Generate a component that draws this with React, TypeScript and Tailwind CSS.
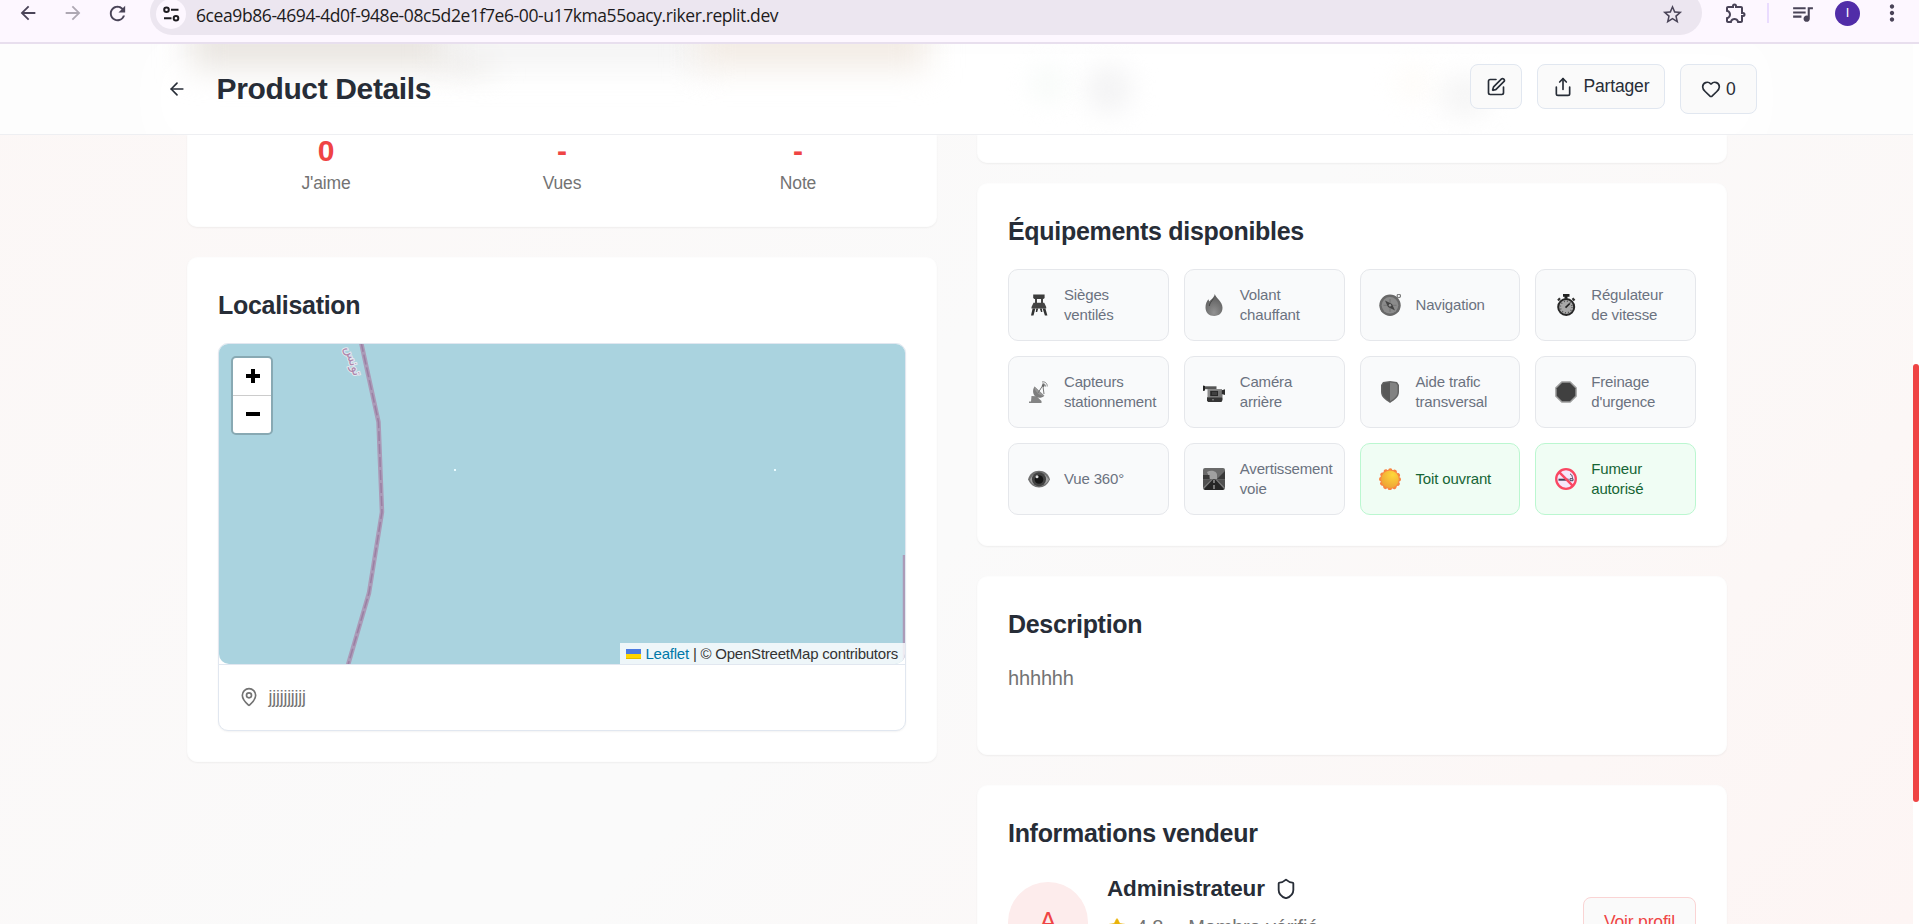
import type { ReactNode } from "react";
import { ArrowLeft, Heart, MapPin, Share, Shield, SquarePen, Star } from "lucide-react";
import {
  MdArrowBack,
  MdArrowForward,
  MdMoreVert,
  MdOutlineExtension,
  MdQueueMusic,
  MdRefresh,
  MdStarBorder,
} from "react-icons/md";

function Icon({ children }: { children: ReactNode }) {
  return (
    <svg width="22" height="22" viewBox="0 0 22 22" className="shrink-0">
      {children}
    </svg>
  );
}

const ChairIcon = () => (
  <Icon>
    <path d="M5.200 0.500h11.400v3.500l-1.200 1H6.400l-1.200-1z" fill="#3d3d3d" />
    <path d="M7 5h2v4H7zM13 5h2v4h-2z" fill="#444" />
    <path d="M5.500 8.800h10.700l2 4.200v1.500H3.500V13z" fill="#444" />
    <path d="M4.600 14.500h2.800L5.500 21.500H3zM8.200 14.500h2l-1 3.500H7.800zM11.800 14.500h2l.6 3.500H13zM14.600 14.500h2.800l2 7h-2.500z" fill="#333" />
  </Icon>
);

const FlameIcon = () => (
  <Icon>
    <defs>
      <radialGradient id="flame" cx="50%" cy="85%" r="75%">
        <stop offset="0" stopColor="#929292" />
        <stop offset="1" stopColor="#5e5e5e" />
      </radialGradient>
    </defs>
    <path d="M11.800 0c1 4.500 7.700 7 7.700 13.800 0 5-3.200 8.200-8.300 8.200-5.200 0-8.700-3.400-8.700-8.500 0-3.500 1.300-6.200 2.800-8.200l1 2.200C8 5.500 11 4 11.800 0z" fill="url(#flame)" />
    <path d="M10.500 4.500C8.500 7.500 6.500 9 6.300 12" stroke="#444" strokeWidth="1" fill="none" />
  </Icon>
);

const CompassIcon = () => (
  <Icon>
    <circle cx="19.800" cy="2" r="1.700" stroke="#777" strokeWidth="1.100" fill="none" />
    <circle cx="11" cy="11.300" r="10.700" fill="#686868" />
    <circle cx="11" cy="11.300" r="8.300" fill="#8b8b8b" />
    <path d="M11 5v13M4.500 11.300h13" stroke="#737373" strokeWidth="1" />
    <path d="M6 6.500l7 3.500 3 6.500-7-3.500z" fill="#444" />
    <circle cx="11" cy="11.300" r="1.200" fill="#999" />
  </Icon>
);

const StopwatchIcon = () => (
  <Icon>
    <path d="M8 0h6.500v2.800h-2v2h-3v-2H8z" fill="#222" />
    <path d="M3 6.500L5 4.300M19.500 6.500l-2-2.200" stroke="#333" strokeWidth="2.200" />
    <circle cx="11.200" cy="13" r="8" fill="#a8a8a8" stroke="#262626" strokeWidth="2" />
    <circle cx="11.200" cy="13" r="5.800" fill="none" stroke="#555" strokeWidth="1.400" strokeDasharray="1 2.037" />
    <path d="M10.500 13.700l4.300-4.200" stroke="#222" strokeWidth="1.700" />
  </Icon>
);

const SatelliteIcon = () => (
  <Icon>
    <path d="M3.500 15l5 .3 5 4.700v2H1v-1.500h2z" fill="#848484" />
    <path d="M6.500 5.500c-2.500 4-1.500 8 1 10 2.800 2 6.300 1.800 8.800-.8z" fill="#7d7d7d" />
    <path d="M6.500 5.500l9.800 9.200-1.300.3c-4-.8-7.500-4-8.500-8z" fill="#969696" />
    <path d="M10 12l5-8M14.800 4l1.200 9" stroke="#777" strokeWidth="1" />
    <circle cx="15.300" cy="4.500" r="1.400" fill="#666" />
    <path d="M14 1c3-.8 5.500 1.500 5.200 4.500M14.500 2.700c1.800-.3 3.200 1 3 2.800" stroke="#777" strokeWidth=".9" fill="none" />
  </Icon>
);

const CameraIcon = () => (
  <Icon>
    <path d="M0 4.500l2 .5v4.500l-2 .5z" fill="#222" />
    <path d="M2 5.300h11.500v2.900H2z" fill="#555" />
    <path d="M4.500 8h14.500v8.500H4.500z" fill="#8a8a8a" />
    <path d="M7.200 9.800h8v5.400h-8z" fill="#292929" />
    <path d="M9 10.800h5v3.200H9z" fill="#404040" />
    <path d="M15.500 9.500h4v6.500h-4z" fill="#777" />
    <path d="M18.800 9.200l3.200-1V14l-3.200-1z" fill="#2c2c2c" />
    <path d="M4 16.300h15.500V19l-1 2H5l-1-1.500z" fill="#353535" />
    <circle cx="10" cy="18.800" r=".8" fill="#999" />
  </Icon>
);

const GuardIcon = () => (
  <Icon>
    <path d="M11 0L18 1l2 3v7c0 5-4.500 8-9 11C6.500 19 2 16 2 11V4l2-3z" fill="#636363" />
    <path d="M11 1.500l6 .8 1.500 2.200V11c0 4-3.500 6.500-7.500 9.300z" fill="#828282" />
    <path d="M11 1.500l-6 .8-1.500 2.200V11c0 4 3.500 6.500 7.500 9.300z" fill="#585858" />
  </Icon>
);

const OctagonIcon = () => (
  <Icon>
    <path d="M6.600 .2h8.800l6.400 6.400v8.800l-6.400 6.400H6.600L.2 15.400V6.600z" fill="#9b9b9b" />
    <path d="M7.200 1.700h7.600l5.500 5.500v7.600l-5.500 5.500H7.200l-5.500-5.500V7.200z" fill="#404040" />
  </Icon>
);

const EyeIcon = () => (
  <Icon>
    <path d="M0 11.500C1.500 5.700 5.500 2.800 11 2.800s9.500 2.900 11 8.700c-2.500 5.200-6 8-11 8s-8.500-2.800-11-8z" fill="#717171" />
    <path d="M2 11.700C4 7.500 6.500 5 11 5s7.500 2.500 10 6.700c-2.500 4-5.800 6.200-10 6.200s-7.500-2.200-9-6.200z" fill="#a0a0a0" />
    <circle cx="11" cy="11.300" r="7" fill="#424242" />
    <circle cx="11" cy="11.500" r="4.300" fill="#161616" />
    <circle cx="9" cy="8.700" r="1.500" fill="#ddd" />
  </Icon>
);

const RoadIcon = () => (
  <Icon>
    <rect width="22" height="22" rx="2" fill="#6a6a6a" />
    <path d="M4 4c4-2.500 10-1 10 3v4H7z" fill="#a0a0a0" />
    <path d="M22 3v8h-8zM0 7h6.500v4H0z" fill="#393939" />
    <path d="M0 11.500h9L0 20zM13 11.500h9V20z" fill="#505050" />
    <path d="M9.800 11.500h2.600L21 21l-1 1H2l-1-1z" fill="#252525" />
    <path d="M11 12v3M11 17v4" stroke="#bbb" strokeWidth="1.100" />
    <path d="M9 11.500L0 20.500M13.200 11.500l8.800 9" stroke="#8d8d8d" strokeWidth=".8" />
  </Icon>
);

const SunIcon = () => (
  <Icon>
    <defs>
      <radialGradient id="sun" cx="65%" cy="25%" r="80%">
        <stop offset="0" stopColor="#ffd83a" />
        <stop offset="1" stopColor="#eda236" />
      </radialGradient>
    </defs>
    <circle cx="11" cy="11.300" r="9" fill="none" stroke="#f98542" strokeWidth="4" strokeLinecap="round" strokeDasharray="0.100 4.612" />
    <circle cx="11" cy="11.300" r="9.700" fill="#f98542" />
    <circle cx="11" cy="11.300" r="8.800" fill="url(#sun)" />
  </Icon>
);

const NoSmokingIcon = () => (
  <Icon>
    <circle cx="11" cy="11" r="9.500" fill="#f6e7fb" />
    <path d="M3.500 10.700h10v2h-10z" fill="#454159" />
    <path d="M15 10.700h3v2h-3zM15 6c3 1 1.500 3 3 4" fill="none" stroke="#454159" strokeWidth="1" />
    <circle cx="11" cy="11" r="9.800" fill="none" stroke="#fa4762" strokeWidth="2.300" />
    <path d="M4.200 4.200l13.600 13.600" stroke="#fa4762" strokeWidth="2.400" />
  </Icon>
);

type Feature = { icon: ReactNode; lines: string[]; active?: boolean };

const features: Feature[] = [
  { icon: <ChairIcon />, lines: ["Sièges", "ventilés"] },
  { icon: <FlameIcon />, lines: ["Volant", "chauffant"] },
  { icon: <CompassIcon />, lines: ["Navigation"] },
  { icon: <StopwatchIcon />, lines: ["Régulateur", "de vitesse"] },
  { icon: <SatelliteIcon />, lines: ["Capteurs", "stationnement"] },
  { icon: <CameraIcon />, lines: ["Caméra", "arrière"] },
  { icon: <GuardIcon />, lines: ["Aide trafic", "transversal"] },
  { icon: <OctagonIcon />, lines: ["Freinage", "d'urgence"] },
  { icon: <EyeIcon />, lines: ["Vue 360°"] },
  { icon: <RoadIcon />, lines: ["Avertissement", "voie"] },
  { icon: <SunIcon />, lines: ["Toit ouvrant"], active: true },
  { icon: <NoSmokingIcon />, lines: ["Fumeur", "autorisé"], active: true },
];

const stats = [
  { value: "0", label: "J'aime" },
  { value: "-", label: "Vues" },
  { value: "-", label: "Note" },
];

function BrowserBar() {
  return (
    <div className="h-11 w-full shrink-0 overflow-hidden border-b-2 border-[#e8dfee] bg-[#fdf7ff]">
      <div className="-mt-[9px] flex h-11 items-center pl-[5px] text-[#4a4458]">
        <div className="flex w-[45px] justify-center"><MdArrowBack size={22} /></div>
        <div className="flex w-[45px] justify-center text-[#aea8b3]"><MdArrowForward size={22} /></div>
        <div className="flex w-[45px] justify-center"><MdRefresh size={23} /></div>
        <div className="ml-[10px] flex h-11 w-[1552px] items-center rounded-full bg-[#ece6f0] pl-[6px] pr-[18px]">
          <div className="mt-[2px] flex size-[30px] items-center justify-center rounded-full bg-[#fdf7ff]">
            <svg width="17" height="16" viewBox="0 0 17 16" fill="none" stroke="#1d1b20" strokeWidth="2">
              <circle cx="3.500" cy="3.800" r="2.300" />
              <path d="M8 3.800h7.500M1 12.200h7.500" />
              <circle cx="13" cy="12.200" r="2.300" />
            </svg>
          </div>
          <div className="ml-[10px] mt-[3px] flex-1 font-['Open_Sans',sans-serif] text-[17.5px] leading-6 tracking-[-0.41px] whitespace-nowrap text-[#1d1b20]">
            6cea9b86-4694-4d0f-948e-08c5d2e1f7e6-00-u17kma55oacy.riker.replit.dev
          </div>
          <MdStarBorder size={23} className="mt-[2px]" />
        </div>
        <div className="flex w-[65px] justify-center pl-[3px]"><MdOutlineExtension size={24} /></div>
        <div className="h-5 w-[2px] bg-[#eadcff]" />
        <div className="flex w-[66px] justify-center"><MdQueueMusic size={25} /></div>
        <div className="flex size-[25px] items-center justify-center rounded-full bg-[#512da8] font-['Roboto',sans-serif] text-[13px] text-white">
          I
        </div>
        <div className="ml-[5px] flex w-[54px] justify-center"><MdMoreVert size={26} /></div>
      </div>
    </div>
  );
}

function Header() {
  return (
    <header className="relative h-[91px] shrink-0 overflow-hidden border-b border-[#eeeff2] bg-[#fdfdfd]">
      <div className="absolute inset-x-[150px] -bottom-4 top-0 bg-white blur-xl" />
      <div className="absolute -top-[26px] left-[190px] h-[50px] w-[300px] bg-[#e9e5e0] blur-[16px]" />
      <div className="absolute -top-[26px] left-[440px] h-[50px] w-[270px] bg-[#f4f4f4] blur-[16px]" />
      <div className="absolute -top-[26px] left-[697px] h-[50px] w-[230px] bg-[#f2ebe4] blur-[16px]" />
      <div className="absolute left-[1030px] top-[20px] h-[40px] w-[36px] rounded-full bg-[#f8fbf9] blur-[12px]" />
      <div className="absolute left-[1086px] top-[20px] h-[50px] w-[46px] rounded-full bg-[#f4f4f5] blur-[12px]" />
      <div className="absolute left-[1395px] top-[20px] h-[40px] w-[36px] rounded-full bg-[#fefcf9] blur-[12px]" />
      <div className="absolute left-[1440px] top-[30px] h-[44px] w-[50px] rounded-full bg-[#f6f6f6] blur-[12px]" />
      <div className="relative flex h-[90px] items-center pl-[167px] pr-[156px] text-[#272d37]">
        <ArrowLeft size={20} />
        <h1 className="ml-[29.5px] flex-1 text-[30px] leading-9 font-bold tracking-[-0.36px]">Product Details</h1>
        <div className="flex items-start gap-[15px] text-[17.5px]">
          <button className="flex h-[45px] w-[52px] items-center justify-center rounded-lg border border-[#e1e7f0] bg-[#fafafa]">
            <SquarePen size={20} />
          </button>
          <button className="flex h-[45px] w-32 items-center rounded-lg border border-[#e1e7f0] bg-[#fafafa] pl-[15px]">
            <Share size={20} />
            <span className="ml-[10.5px]">Partager</span>
          </button>
          <button className="flex h-[50px] w-[77px] items-center rounded-lg border border-[#e1e7f0] bg-[#fafafa] pl-5">
            <Heart size={20} />
            <span className="ml-[5px]">0</span>
          </button>
        </div>
      </div>
    </header>
  );
}

function Card({ title, className, children }: { title: string; className: string; children: ReactNode }) {
  return (
    <section className={`rounded-[10px] border border-[#fdfdfd] bg-white p-[30px] shadow-[0_1px_2px_rgba(0,0,0,0.05)] ${className}`}>
      <h2 className="mb-5 text-[25px] leading-[35px] font-bold tracking-[-0.3px] text-[#272d37]">{title}</h2>
      {children}
    </section>
  );
}

function LocationMap() {
  return (
    <div className="h-[388px] overflow-hidden rounded-[10px] border border-[#e1e7f0] bg-white shadow-[0_1px_2px_rgba(0,0,0,0.05)]">
      <div className="relative h-[320px] overflow-hidden rounded-b-[10px] bg-[#aad3df]">
        <svg width="686" height="320" viewBox="219 344 686 320" className="block">
          <path d="M361 342L378.500 422l3.500 90L369 593l-21 72M905 555v108" fill="none" stroke="#ab9bb8" strokeWidth="4.500" strokeLinejoin="round" />
          <path d="M361 342L378.500 422l3.500 90L369 593l-21 72" fill="none" stroke="#9b7fa3" strokeWidth="1.500" strokeDasharray="10 3" />
          <text
            x="353"
            y="365"
            transform="rotate(72 353 361)"
            textAnchor="middle"
            fontFamily="DejaVu Sans"
            fontSize="13"
            fill="#ad86ab"
            stroke="#e4e8f0"
            strokeWidth="2"
            paintOrder="stroke"
          >
            تونس
          </text>
          <path d="M454 469h2v2h-2zM774 469h2v2h-2z" fill="#e9fbff" />
        </svg>
        <div className="absolute left-[12px] top-[12px] w-[42px] rounded-[5px] border-2 border-[#88a9b3] bg-white text-black">
          <div className="flex h-[38px] items-center justify-center border-b border-[#ccc] pl-[2px] pb-[2px]">
            <svg width="14" height="14" viewBox="0 0 14 14"><path d="M7 0v14M0 7h14" stroke="black" strokeWidth="4" /></svg>
          </div>
          <div className="flex h-[37px] items-center justify-center pl-[2px] pb-[2px]">
            <svg width="14" height="14" viewBox="0 0 14 14"><path d="M0 7h14" stroke="black" strokeWidth="4" /></svg>
          </div>
        </div>
        <div className="absolute bottom-0 right-0 flex h-[21px] items-center bg-white/80 pl-[6px] pr-[7px] text-[15px] leading-[21px] tracking-[-0.22px] whitespace-nowrap text-[#333]">
          <svg width="15" height="10" viewBox="0 0 15 10" className="mr-1">
            <path d="M0 0h15v5H0z" fill="#4c7be1" />
            <path d="M0 5h15v5H0z" fill="#ffd500" />
            <path d="M0 9h15v1H0z" fill="#e0bc00" />
          </svg>
          <span className="text-[#0078a8]">Leaflet</span>
          <span>&nbsp;| © OpenStreetMap contributors</span>
        </div>
      </div>
      <div className="flex h-[67px] items-center gap-[9px] border-t border-[#e1e7f0] pb-[2px] pl-5 text-[17.5px] text-[#737373]">
        <MapPin size={20} />
        <span className="mt-[1px] pl-[0.5px]">jjjjjjjjjj</span>
      </div>
    </div>
  );
}

export default function App() {
  return (
    <div className="flex h-[924px] w-[1919px] flex-col overflow-hidden bg-white font-['Liberation_Sans',Arial,sans-serif] tracking-[-0.01em]">
      <BrowserBar />
      <div className="flex min-h-0 flex-1">
        <div className="flex w-[1913px] flex-col bg-[linear-gradient(135deg,#fcf7f6_0%,#fafafa_45%,#fafafa_52%,#fcf7f6_82%,#fdf5f4_100%)]">
          <Header />
          <main className="flex min-h-0 flex-1 items-start gap-10 pl-[187px]">
            <div className="flex w-[750px] flex-col gap-[30px]">
              <section className="grid h-[92px] grid-cols-3 gap-5 rounded-b-[10px] border-x border-b border-[#fdfdfd] bg-white px-[30px] text-center shadow-[0_1px_2px_rgba(0,0,0,0.05)]">
                {stats.map((s) => (
                  <div key={s.label}>
                    <div className="text-[30px] leading-8 font-bold text-[#ef4444]">{s.value}</div>
                    <div className="mt-1 text-[17.5px] leading-[25px] text-[#737373]">{s.label}</div>
                  </div>
                ))}
              </section>
              <Card title="Localisation" className="h-[505px]">
                <LocationMap />
              </Card>
            </div>
            <div className="flex w-[750px] flex-col">
              <div className="h-7 rounded-b-[10px] border-x border-b border-[#fdfdfd] bg-white shadow-[0_1px_2px_rgba(0,0,0,0.05)]" />
              <Card title="Équipements disponibles" className="mt-5 h-[363px]">
                <div className="grid grid-cols-4 gap-[15px]">
                  {features.map((f) => (
                    <div
                      key={f.lines[0]}
                      className={`flex h-[72px] items-center rounded-[10px] border pl-[18.5px] ${
                        f.active ? "border-[#bbf7d0] bg-[#f0fdf4] text-[#166534]" : "border-[#e5e7eb] bg-[#f9fafb] text-[#6b7280]"
                      }`}
                    >
                      {f.icon}
                      <div className="ml-[14.5px] text-[15px] leading-5 whitespace-nowrap">
                        {f.lines.map((line) => (
                          <div key={line}>{line}</div>
                        ))}
                      </div>
                    </div>
                  ))}
                </div>
              </Card>
              <Card title="Description" className="mt-[30px] h-[179px]">
                <p className="text-xl leading-[32.5px] text-[#737373]">hhhhhh</p>
              </Card>
              <Card title="Informations vendeur" className="mt-[30px] h-[220px]">
                <div className="flex h-[102px] items-center">
                  <div className="flex size-20 items-center justify-center rounded-full bg-[#fdecec] text-[25px] text-[#ef4444]">A</div>
                  <div className="ml-[19px] flex-1 self-start">
                    <div className="flex items-center gap-[10px] text-[22.500px] leading-[35px] font-bold text-[#272d37]">
                      Administrateur
                      <Shield size={22} />
                    </div>
                    <div className="mt-[6px] flex items-center text-xl leading-[30px] text-[#737373]">
                      <Star size={20} className="fill-[#eab308] text-[#eab308]" strokeWidth={1} />
                      <span className="ml-[9px]">4.8</span>
                      <span className="ml-[9px]">•</span>
                      <span className="ml-[9px]">Membre vérifié</span>
                    </div>
                  </div>
                  <button className="h-[50px] w-[113px] rounded-lg border border-[#fad4d4] bg-[#fafafa] text-[17.5px] text-[#ef4444]">
                    Voir profil
                  </button>
                </div>
              </Card>
            </div>
          </main>
        </div>
        <div className="w-[6px] bg-white pt-80">
          <div className="h-[438px] rounded-full bg-[#ef4444]" />
        </div>
      </div>
    </div>
  );
}
